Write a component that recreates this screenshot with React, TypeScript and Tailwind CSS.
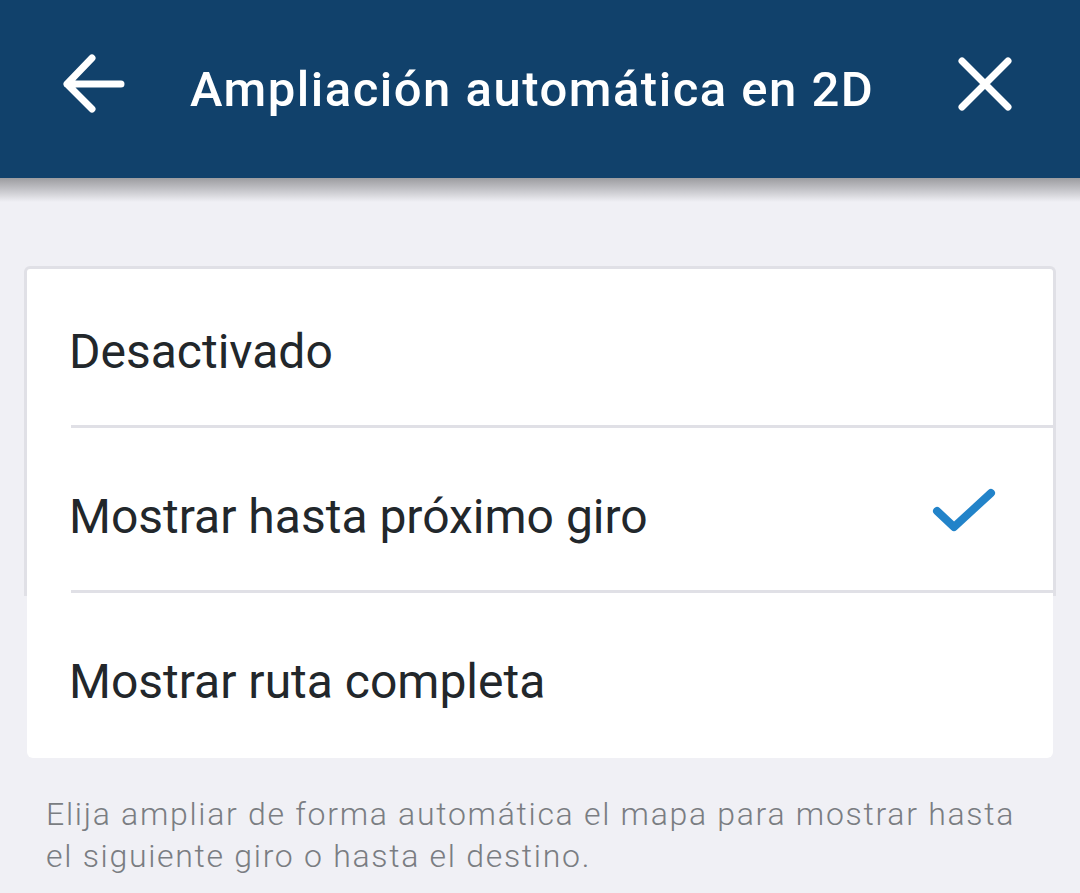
import React from "react";

function BackArrow() {
  return (
    <svg width="70" height="70" viewBox="0 0 70 70" fill="none">
      <path d="M9 35 H63 M34 9 L9 35 L34 60" stroke="white" strokeWidth="7" strokeLinecap="round" strokeLinejoin="round" />
    </svg>
  );
}

function CloseX() {
  return (
    <svg width="70" height="70" viewBox="0 0 70 70" fill="none">
      <path d="M12 12 L58 58 M58 12 L12 58" stroke="white" strokeWidth="7" strokeLinecap="round" />
    </svg>
  );
}

function Check() {
  return (
    <svg width="66" height="50" viewBox="0 0 66 50" fill="none">
      <path d="M6 26 L23 42 L60 8" stroke="#2283c9" strokeWidth="8" strokeLinecap="round" strokeLinejoin="round" />
    </svg>
  );
}

export default function App() {
  return (
    <div
      className="w-[1080px] h-[893px] bg-[#f0f0f5] overflow-hidden flex flex-col"
      style={{ fontFamily: "Roboto, 'Noto Sans', sans-serif" }}
    >
      <header className="h-[178px] bg-[#11416b] flex items-center shrink-0">
        <div className="ml-[58px] -mt-[11px] w-[70px] h-[70px] flex items-center justify-center">
          <BackArrow />
        </div>
        <h1 className="ml-[62px] text-white text-[49px] font-medium tracking-[1.5px] leading-none">
          Ampliación automática en 2D
        </h1>
        <div className="ml-auto mr-[60px] -mt-[10px] w-[70px] h-[70px] flex items-center justify-center">
          <CloseX />
        </div>
      </header>
      <div className="h-[24px] shrink-0 bg-gradient-to-b from-[#9c9ca0] to-[#f0f0f5]" />

      <div className="mt-[64px] mx-[24px]">
        <div className="border-[3px] border-b-0 border-[#e0e0e6] rounded-t-[6px] bg-white">
          <div className="h-[156px] flex items-center pl-[42px] pt-[10px]">
            <span className="text-[48px] text-[#22272b] leading-none">Desactivado</span>
          </div>
          <div className="ml-[44px] h-[3px] bg-[#e0e0e6]" />
          <div className="h-[162px] flex items-center pl-[42px] pr-[56px] pt-[15px]">
            <span className="text-[48px] text-[#22272b] leading-none">Mostrar hasta próximo giro</span>
            <div className="ml-auto -mt-[14px]">
              <Check />
            </div>
          </div>
          <div className="ml-[44px] h-[3px] bg-[#e0e0e6]" />
          <div className="h-[3px]" />
        </div>
        <div className="mx-[3px] h-[162px] bg-white rounded-b-[6px] flex items-center pl-[42px] pt-[10px]">
          <span className="text-[48px] text-[#22272b] leading-none">Mostrar ruta completa</span>
        </div>
      </div>

      <p className="mt-[35px] ml-[46px] mr-[30px] text-[32px] leading-[42px] text-[#7a7d82] font-light tracking-[1.7px]">
        Elija ampliar de forma automática el mapa para mostrar hasta el siguiente giro o hasta el destino.
      </p>
    </div>
  );
}
